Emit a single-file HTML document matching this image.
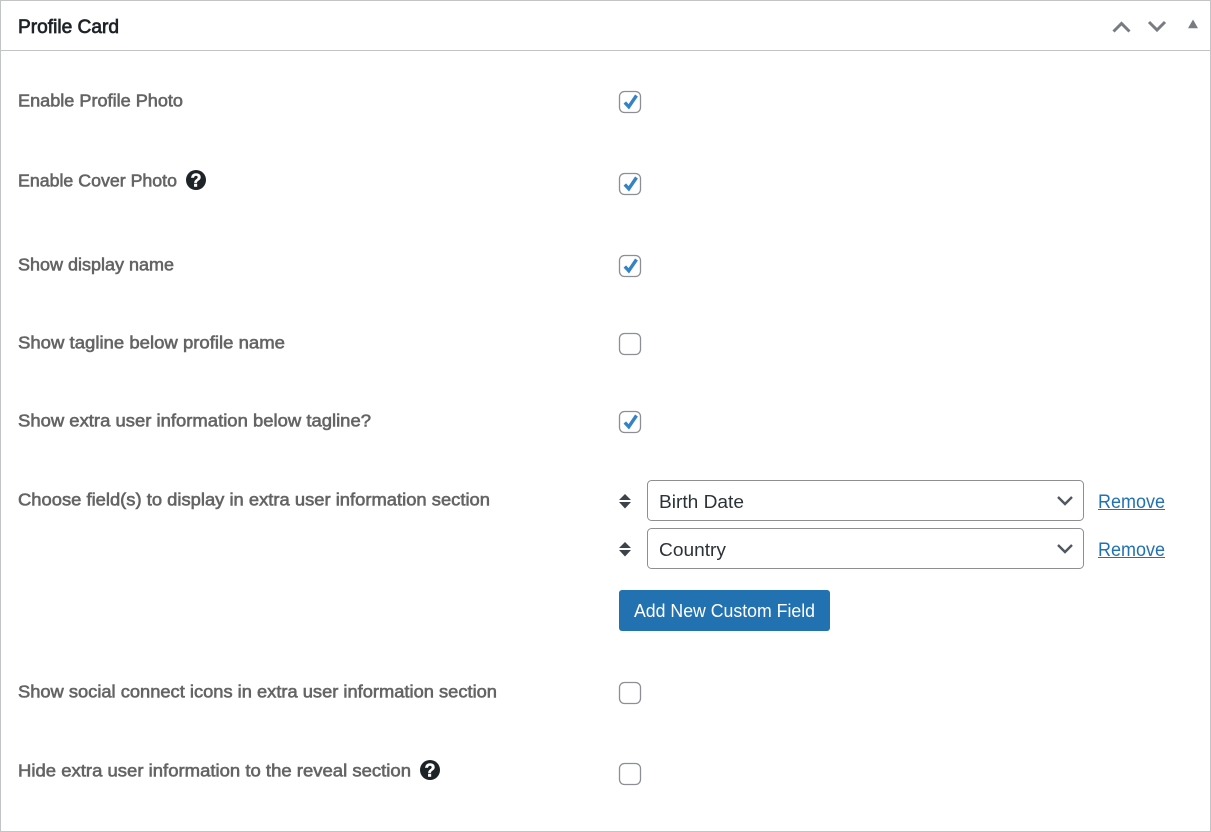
<!DOCTYPE html>
<html><head><meta charset="utf-8"><style>
html,body{margin:0;padding:0;background:#fff}
body{width:1211px;height:832px;overflow:hidden;position:relative}
svg{position:absolute;left:0;top:0;display:block}
text{font-family:"Liberation Sans",sans-serif}
.l{font-size:17.5px;font-weight:400;fill:#646464;stroke:#646464;stroke-width:.6px}
.s{font-size:18.5px;fill:#2c3338}
.r{font-size:19px;fill:#2271b1}
.cb{fill:#fff;stroke:#8c8f94;stroke-width:1.3}
.ck{fill:none;stroke:#3582c4;stroke-width:3.4}
.sel{fill:#fff;stroke:#8c8f94;stroke-width:1}
</style></head><body>
<svg width="1211" height="832" viewBox="0 0 1211 832">
<rect x="0.5" y="0.5" width="1210" height="831" fill="#fff" stroke="#c3c4c7"/>
<line x1="1" y1="50.5" x2="1210" y2="50.5" stroke="#c3c4c7"/>
<text x="18" y="33" font-size="19" fill="#1d2327" stroke="#1d2327" stroke-width=".7" textLength="101" lengthAdjust="spacingAndGlyphs">Profile Card</text>
<path d="M1113.5 31.5 L1121.5 23.5 L1129.5 31.5" fill="none" stroke="#787c82" stroke-width="3"/>
<path d="M1149 22 L1157 30 L1165 22" fill="none" stroke="#787c82" stroke-width="3"/>
<path d="M1188 28.3 L1193 19.5 L1198 28.3 Z" fill="#787c82"/>

<text class="l" x="18" y="106.5" textLength="165" lengthAdjust="spacingAndGlyphs">Enable Profile Photo</text>
<text class="l" x="18" y="186.5" textLength="159" lengthAdjust="spacingAndGlyphs">Enable Cover Photo</text>
<text class="l" x="18" y="270.5" textLength="156" lengthAdjust="spacingAndGlyphs">Show display name</text>
<text class="l" x="18" y="348.5" textLength="267" lengthAdjust="spacingAndGlyphs">Show tagline below profile name</text>
<text class="l" x="18" y="426.5" textLength="353" lengthAdjust="spacingAndGlyphs">Show extra user information below tagline?</text>
<text class="l" x="18" y="505.5" textLength="472" lengthAdjust="spacingAndGlyphs">Choose field(s) to display in extra user information section</text>
<text class="l" x="18" y="697.5" textLength="479" lengthAdjust="spacingAndGlyphs">Show social connect icons in extra user information section</text>
<text class="l" x="18" y="776.5" textLength="393" lengthAdjust="spacingAndGlyphs">Hide extra user information to the reveal section</text>

<circle cx="196" cy="180" r="10" fill="#1d2327"/>
<text x="196" y="186.5" font-size="18" font-weight="700" fill="#fff" stroke="#fff" stroke-width=".5" text-anchor="middle">?</text>
<circle cx="430" cy="770" r="10" fill="#1d2327"/>
<text x="430" y="776.5" font-size="18" font-weight="700" fill="#fff" stroke="#fff" stroke-width=".5" text-anchor="middle">?</text>

<rect class="cb" x="619.5" y="91.5" width="21" height="21" rx="5"/>
<path class="ck" d="M624.8 102.5 L628.8 106.8 L636.5 95.5"/>
<rect class="cb" x="619.5" y="173.5" width="21" height="21" rx="5"/>
<path class="ck" d="M624.8 184.5 L628.8 188.8 L636.5 177.5"/>
<rect class="cb" x="619.5" y="255.5" width="21" height="21" rx="5"/>
<path class="ck" d="M624.8 266.5 L628.8 270.8 L636.5 259.5"/>
<rect class="cb" x="619.5" y="333.5" width="21" height="21" rx="5"/>
<rect class="cb" x="619.5" y="411.5" width="21" height="21" rx="5"/>
<path class="ck" d="M624.8 422.5 L628.8 426.8 L636.5 415.5"/>
<rect class="cb" x="619.5" y="682.5" width="21" height="21" rx="5"/>
<rect class="cb" x="619.5" y="763.5" width="21" height="21" rx="5"/>

<path d="M625 494 L631 500 L619 500 Z M619 502 L631 502 L625 508.5 Z" fill="#3c434a"/>
<path d="M625 542 L631 548 L619 548 Z M619 550 L631 550 L625 556.5 Z" fill="#3c434a"/>

<rect class="sel" x="647.5" y="480.5" width="436" height="40" rx="4"/>
<text class="s" x="659" y="508" textLength="85" lengthAdjust="spacingAndGlyphs">Birth Date</text>
<path d="M1058 497 L1065 504 L1072 497" fill="none" stroke="#50575e" stroke-width="2.4"/>
<rect class="sel" x="647.5" y="528.5" width="436" height="40" rx="4"/>
<text class="s" x="659" y="556" textLength="67" lengthAdjust="spacingAndGlyphs">Country</text>
<path d="M1058 545 L1065 552 L1072 545" fill="none" stroke="#50575e" stroke-width="2.4"/>

<text class="r" x="1098" y="508" textLength="67" lengthAdjust="spacingAndGlyphs">Remove</text>
<line x1="1098" y1="509.5" x2="1165" y2="509.5" stroke="#2271b1"/>
<text class="r" x="1098" y="556" textLength="67" lengthAdjust="spacingAndGlyphs">Remove</text>
<line x1="1098" y1="557.5" x2="1165" y2="557.5" stroke="#2271b1"/>

<rect x="619" y="590" width="211" height="41" rx="3" fill="#2271b1"/>
<text x="634" y="617" font-size="18" fill="#fff" textLength="181" lengthAdjust="spacingAndGlyphs">Add New Custom Field</text>
</svg>
</body></html>
